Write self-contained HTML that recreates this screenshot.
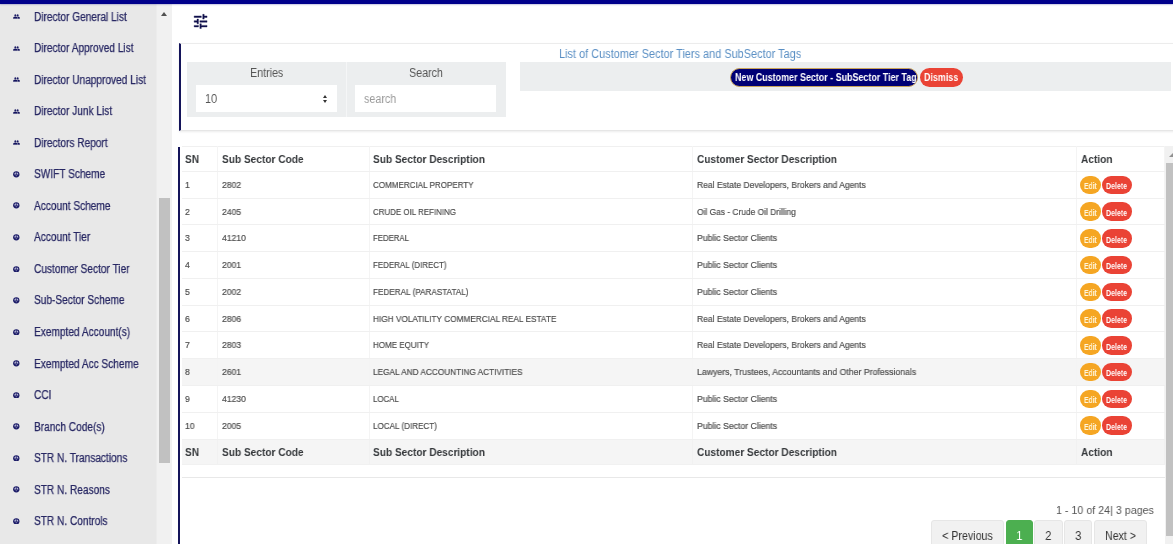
<!DOCTYPE html>
<html lang="en"><head><meta charset="utf-8"><title>Customer Sector Tiers</title>
<style>
html,body{margin:0;padding:0}
body{width:1173px;height:544px;overflow:hidden;background:#fff;position:relative;font-family:"Liberation Sans",sans-serif;color:#333}
.sx{will-change:transform;display:inline-block;transform:scaleX(var(--k,1));transform-origin:0 50%;white-space:nowrap}
.topbar{position:absolute;left:0;top:0;width:1173px;height:4.400px;background:#00008b;z-index:5;box-shadow:0 1px 1.500px rgba(0,0,120,.22)}
.sidebar{position:absolute;left:0;top:0;width:156px;height:544px;background:#e8e8e8;overflow:hidden}
.si{position:absolute;left:0;height:20px;line-height:20px;width:157px}
.sic{position:absolute;left:12.900px;top:7.100px}
.sic.c{left:13px;top:7.100px}
.st{-webkit-text-stroke:.25px #272763;will-change:transform;position:absolute;left:34.400px;top:.5px;font-size:12px;color:#272763;display:inline-block;transform:scaleX(.843);transform-origin:0 50%;white-space:nowrap}
.sscroll{position:absolute;left:156px;top:4px;width:16px;border-left:1px solid #ececec;box-sizing:border-box;height:540px;background:#f1f1f1}
.sarrow{position:absolute;left:4px;top:7.500px;width:0;height:0;border-left:3.500px solid transparent;border-right:3.500px solid transparent;border-bottom:4px solid #505050}
.sthumb{position:absolute;left:2px;top:193.500px;width:11px;height:265px;background:#c1c1c1}
.tune{position:absolute;left:192.050px;top:12.050px}
.card1{position:absolute;left:178.500px;top:43px;width:1000px;height:88px;border-left:2px solid #14145a;border-top:1px solid #ececec;border-bottom:1px solid #e6e6e6;box-shadow:0 1px 2px rgba(0,0,0,.08);box-sizing:border-box;background:#fff}
.fbox{position:absolute;top:62.200px;height:55.300px;background:#eceeef}
.fdiv{position:absolute;left:345.800px;top:62.200px;width:1px;height:55.300px;background:#f5f6f7}
.flabel{position:absolute;top:64.500px;width:159px;text-align:center;font-size:12px;color:#555;line-height:16px}
.flabel .sx{transform-origin:50% 50%}
.finput{position:absolute;top:85.300px;width:141px;height:26.700px;background:#fff;font-size:12px;line-height:27.600px;color:#555}
.finput .sx{position:absolute;left:9px;top:1.200px}
.finput .ph{color:#9c9c9c;font-size:12.500px}
.updown{position:absolute;left:127.500px;top:10px;width:5px;height:8px}
.updown:before{content:"";position:absolute;left:0;top:0;border-left:2.500px solid transparent;border-right:2.500px solid transparent;border-bottom:3px solid #333}
.updown:after{content:"";position:absolute;left:0;top:4.500px;border-left:2.500px solid transparent;border-right:2.500px solid transparent;border-top:3px solid #333}
.title{position:absolute;left:559px;top:45.500px;font-size:12px;line-height:16px;color:#5a8fc4}
.bar{position:absolute;left:520.300px;top:62.300px;width:651.200px;height:28.300px;background:#eceeef}
.btn{position:absolute;top:67.500px;height:19px;border-radius:10px;box-sizing:border-box;color:#fff;font-size:10.500px;font-weight:700;line-height:19px;white-space:nowrap}
.btn .sx{position:absolute;left:4.500px;top:0}
.btn.navy{left:730px;width:188px;background:#000075;border:1px solid #c9a45a;line-height:17px}
.btn.navy .sx{left:3.500px}
.btn.red{left:919.500px;width:43.500px;background:#ea4335}
.card2{position:absolute;left:178.300px;top:147px;width:986.300px;height:400px;border-left:2px solid #14145a;box-sizing:border-box;background:#fff}
.tbl{position:absolute;left:182px;top:145.900px;width:982.500px;border-collapse:collapse;table-layout:fixed}
.tbl th,.tbl td{box-sizing:border-box;border:1px solid #f0f0f0;border-left-color:#f4f4f4;border-right-color:#f4f4f4;padding:0 0 0 4px;text-align:left;vertical-align:middle;overflow:hidden;white-space:nowrap}
.tbl th:first-child,.tbl td:first-child{border-left:none;padding-left:3.200px}
.tbl th{height:25px;font-size:11.500px;font-weight:700;color:#36393c}
.tbl td{height:26.770px;font-size:9px;color:#4c4c4c;-webkit-text-stroke:.18px #4c4c4c}
.tbl tr.foot th{background:#f5f5f5;border-color:#f1f1f1}
.tbl tr.hov td{background:#f5f5f5}
.c1{width:35.500px}.c2{width:151.500px}.c3{width:323.500px}.c4{width:384px}.c5{width:88px}
.tbl .k2{padding-left:4.300px}.tbl .k3{padding-left:3.800px}.tbl .k4{padding-left:4px}.tbl .k5{padding-left:4px}
.hx{--k:.88}
.rx{--k:.895}
.rx.m{--k:.948}
.rx.d{--k:.955}
.pill{-webkit-text-stroke:0;display:inline-block;vertical-align:middle;height:18.400px;border-radius:9.200px;color:#fff;font-size:9px;font-weight:700;line-height:18.400px;position:relative}
.pill .sx{position:absolute;left:4.600px;top:1.400px}
.pill.ed{width:21.300px;background:#f5a623;margin-left:-1.1px;color:#fff6dc}
.pill.de{width:29.800px;background:#ea4335;margin-left:.8px}
.pill.de .sx{left:3.800px}
.pill.ed .sx{left:4.100px;--k:.75}
.px{--k:.78}
.hr2{position:absolute;left:182px;top:477px;width:983px;height:1px;background:#e8e8e8}
.pginfo{position:absolute;left:1055.700px;top:502.400px;font-size:11.800px;line-height:16px;color:#555}
.pager{position:absolute;left:930.700px;top:520.300px;height:30px;width:220px}
.pb{position:absolute;top:0;height:30px;box-sizing:border-box;border:1px solid #e6e6e6;border-radius:3px 3px 0 0;background:#f1f1f1;color:#333;font-size:12px;line-height:30.200px;text-align:center}
.pb .sx{transform-origin:50% 50%}
.pb.on{background:#4caf50;border-color:#4caf50;color:#fff}
.pgx{--k:.885}
.pscroll{position:absolute;left:1165px;top:146px;width:17px;height:400px;background:#f1f1f1}
.parrow{position:absolute;left:3.700px;top:6.800px;width:0;height:0;border-left:4.300px solid transparent;border-right:4.300px solid transparent;border-bottom:4.100px solid #909090}
.pthumb{position:absolute;left:1.300px;top:17.200px;width:14px;height:372.500px;background:#c1c1c1}

</style></head>
<body>
<div class="topbar"></div>
<div class="sidebar">
<div class="si" style="top:6.20px"><svg class="sic" viewBox="0 0 24 24" width="7" height="7"><path fill="#14145f" stroke="#14145f" stroke-width="1.2" d="M16 11c1.66 0 2.99-1.34 2.99-3S17.66 5 16 5c-1.66 0-3 1.34-3 3s1.340 3 3 3zm-8 0c1.66 0 2.990-1.340 2.990-3S9.660 5 8 5C6.340 5 5 6.340 5 8s1.340 3 3 3zm0 2c-2.330 0-7 1.170-7 3.500V19h14v-2.500c0-2.330-4.670-3.500-7-3.500zm8 0c-.29 0-.62.02-.97.05 1.160.84 1.970 1.970 1.970 3.450V19h6v-2.500c0-2.330-4.670-3.500-7-3.500z"/></svg><span class="st">Director General List</span></div>
<div class="si" style="top:37.73px"><svg class="sic" viewBox="0 0 24 24" width="7" height="7"><path fill="#14145f" stroke="#14145f" stroke-width="1.2" d="M16 11c1.66 0 2.99-1.34 2.99-3S17.66 5 16 5c-1.66 0-3 1.34-3 3s1.340 3 3 3zm-8 0c1.66 0 2.990-1.340 2.990-3S9.660 5 8 5C6.340 5 5 6.340 5 8s1.340 3 3 3zm0 2c-2.330 0-7 1.170-7 3.500V19h14v-2.500c0-2.330-4.670-3.500-7-3.500zm8 0c-.29 0-.62.02-.97.05 1.160.84 1.970 1.970 1.970 3.450V19h6v-2.500c0-2.330-4.670-3.500-7-3.500z"/></svg><span class="st">Director Approved List</span></div>
<div class="si" style="top:69.26px"><svg class="sic" viewBox="0 0 24 24" width="7" height="7"><path fill="#14145f" stroke="#14145f" stroke-width="1.2" d="M16 11c1.66 0 2.99-1.34 2.99-3S17.66 5 16 5c-1.66 0-3 1.34-3 3s1.340 3 3 3zm-8 0c1.66 0 2.990-1.340 2.990-3S9.660 5 8 5C6.340 5 5 6.340 5 8s1.340 3 3 3zm0 2c-2.330 0-7 1.170-7 3.500V19h14v-2.500c0-2.330-4.670-3.500-7-3.500zm8 0c-.29 0-.62.02-.97.05 1.160.84 1.970 1.970 1.970 3.450V19h6v-2.500c0-2.330-4.670-3.500-7-3.500z"/></svg><span class="st">Director Unapproved List</span></div>
<div class="si" style="top:100.79px"><svg class="sic" viewBox="0 0 24 24" width="7" height="7"><path fill="#14145f" stroke="#14145f" stroke-width="1.2" d="M16 11c1.66 0 2.99-1.34 2.99-3S17.66 5 16 5c-1.66 0-3 1.34-3 3s1.340 3 3 3zm-8 0c1.66 0 2.990-1.340 2.990-3S9.660 5 8 5C6.340 5 5 6.340 5 8s1.340 3 3 3zm0 2c-2.330 0-7 1.170-7 3.500V19h14v-2.500c0-2.330-4.670-3.500-7-3.500zm8 0c-.29 0-.62.02-.97.05 1.160.84 1.970 1.970 1.970 3.450V19h6v-2.500c0-2.330-4.670-3.500-7-3.500z"/></svg><span class="st">Director Junk List</span></div>
<div class="si" style="top:132.32px"><svg class="sic" viewBox="0 0 24 24" width="7" height="7"><path fill="#14145f" stroke="#14145f" stroke-width="1.2" d="M16 11c1.66 0 2.99-1.34 2.99-3S17.66 5 16 5c-1.66 0-3 1.34-3 3s1.340 3 3 3zm-8 0c1.66 0 2.990-1.340 2.990-3S9.660 5 8 5C6.340 5 5 6.340 5 8s1.340 3 3 3zm0 2c-2.330 0-7 1.170-7 3.500V19h14v-2.500c0-2.330-4.670-3.500-7-3.500zm8 0c-.29 0-.62.02-.97.05 1.160.84 1.970 1.970 1.970 3.450V19h6v-2.500c0-2.330-4.670-3.500-7-3.500z"/></svg><span class="st">Directors Report</span></div>
<div class="si" style="top:163.85px"><svg class="sic c" viewBox="0 0 24 24" width="6.600" height="6.600"><circle cx="12" cy="12" r="11.500" fill="#1a1a66"/><path d="M4.500 12.500A7.500 7.500 0 0 1 10.800 4.600V12.500z" fill="#b4b4d4"/><path d="M19.500 12.500A7.500 7.500 0 0 0 13.200 4.600V12.500z" fill="#b4b4d4"/><ellipse cx="12" cy="17" rx="3.600" ry="1.700" fill="#9090bd"/></svg><span class="st">SWIFT Scheme</span></div>
<div class="si" style="top:195.38px"><svg class="sic c" viewBox="0 0 24 24" width="6.600" height="6.600"><circle cx="12" cy="12" r="11.500" fill="#1a1a66"/><path d="M4.500 12.500A7.500 7.500 0 0 1 10.800 4.600V12.500z" fill="#b4b4d4"/><path d="M19.500 12.500A7.500 7.500 0 0 0 13.200 4.600V12.500z" fill="#b4b4d4"/><ellipse cx="12" cy="17" rx="3.600" ry="1.700" fill="#9090bd"/></svg><span class="st">Account Scheme</span></div>
<div class="si" style="top:226.91px"><svg class="sic c" viewBox="0 0 24 24" width="6.600" height="6.600"><circle cx="12" cy="12" r="11.500" fill="#1a1a66"/><path d="M4.500 12.500A7.500 7.500 0 0 1 10.800 4.600V12.500z" fill="#b4b4d4"/><path d="M19.500 12.500A7.500 7.500 0 0 0 13.200 4.600V12.500z" fill="#b4b4d4"/><ellipse cx="12" cy="17" rx="3.600" ry="1.700" fill="#9090bd"/></svg><span class="st">Account Tier</span></div>
<div class="si" style="top:258.44px"><svg class="sic c" viewBox="0 0 24 24" width="6.600" height="6.600"><circle cx="12" cy="12" r="11.500" fill="#1a1a66"/><path d="M4.500 12.500A7.500 7.500 0 0 1 10.800 4.600V12.500z" fill="#b4b4d4"/><path d="M19.500 12.500A7.500 7.500 0 0 0 13.200 4.600V12.500z" fill="#b4b4d4"/><ellipse cx="12" cy="17" rx="3.600" ry="1.700" fill="#9090bd"/></svg><span class="st">Customer Sector Tier</span></div>
<div class="si" style="top:289.97px"><svg class="sic c" viewBox="0 0 24 24" width="6.600" height="6.600"><circle cx="12" cy="12" r="11.500" fill="#1a1a66"/><path d="M4.500 12.500A7.500 7.500 0 0 1 10.800 4.600V12.500z" fill="#b4b4d4"/><path d="M19.500 12.500A7.500 7.500 0 0 0 13.200 4.600V12.500z" fill="#b4b4d4"/><ellipse cx="12" cy="17" rx="3.600" ry="1.700" fill="#9090bd"/></svg><span class="st">Sub-Sector Scheme</span></div>
<div class="si" style="top:321.50px"><svg class="sic c" viewBox="0 0 24 24" width="6.600" height="6.600"><circle cx="12" cy="12" r="11.500" fill="#1a1a66"/><path d="M4.500 12.500A7.500 7.500 0 0 1 10.800 4.600V12.500z" fill="#b4b4d4"/><path d="M19.500 12.500A7.500 7.500 0 0 0 13.200 4.600V12.500z" fill="#b4b4d4"/><ellipse cx="12" cy="17" rx="3.600" ry="1.700" fill="#9090bd"/></svg><span class="st">Exempted Account(s)</span></div>
<div class="si" style="top:353.03px"><svg class="sic c" viewBox="0 0 24 24" width="6.600" height="6.600"><circle cx="12" cy="12" r="11.500" fill="#1a1a66"/><path d="M4.500 12.500A7.500 7.500 0 0 1 10.800 4.600V12.500z" fill="#b4b4d4"/><path d="M19.500 12.500A7.500 7.500 0 0 0 13.200 4.600V12.500z" fill="#b4b4d4"/><ellipse cx="12" cy="17" rx="3.600" ry="1.700" fill="#9090bd"/></svg><span class="st">Exempted Acc Scheme</span></div>
<div class="si" style="top:384.56px"><svg class="sic c" viewBox="0 0 24 24" width="6.600" height="6.600"><circle cx="12" cy="12" r="11.500" fill="#1a1a66"/><path d="M4.500 12.500A7.500 7.500 0 0 1 10.800 4.600V12.500z" fill="#b4b4d4"/><path d="M19.500 12.500A7.500 7.500 0 0 0 13.200 4.600V12.500z" fill="#b4b4d4"/><ellipse cx="12" cy="17" rx="3.600" ry="1.700" fill="#9090bd"/></svg><span class="st">CCI</span></div>
<div class="si" style="top:416.09px"><svg class="sic c" viewBox="0 0 24 24" width="6.600" height="6.600"><circle cx="12" cy="12" r="11.500" fill="#1a1a66"/><path d="M4.500 12.500A7.500 7.500 0 0 1 10.800 4.600V12.500z" fill="#b4b4d4"/><path d="M19.500 12.500A7.500 7.500 0 0 0 13.200 4.600V12.500z" fill="#b4b4d4"/><ellipse cx="12" cy="17" rx="3.600" ry="1.700" fill="#9090bd"/></svg><span class="st">Branch Code(s)</span></div>
<div class="si" style="top:447.62px"><svg class="sic c" viewBox="0 0 24 24" width="6.600" height="6.600"><circle cx="12" cy="12" r="11.500" fill="#1a1a66"/><path d="M4.500 12.500A7.500 7.500 0 0 1 10.800 4.600V12.500z" fill="#b4b4d4"/><path d="M19.500 12.500A7.500 7.500 0 0 0 13.200 4.600V12.500z" fill="#b4b4d4"/><ellipse cx="12" cy="17" rx="3.600" ry="1.700" fill="#9090bd"/></svg><span class="st">STR N. Transactions</span></div>
<div class="si" style="top:479.15px"><svg class="sic c" viewBox="0 0 24 24" width="6.600" height="6.600"><circle cx="12" cy="12" r="11.500" fill="#1a1a66"/><path d="M4.500 12.500A7.500 7.500 0 0 1 10.800 4.600V12.500z" fill="#b4b4d4"/><path d="M19.500 12.500A7.500 7.500 0 0 0 13.200 4.600V12.500z" fill="#b4b4d4"/><ellipse cx="12" cy="17" rx="3.600" ry="1.700" fill="#9090bd"/></svg><span class="st">STR N. Reasons</span></div>
<div class="si" style="top:510.68px"><svg class="sic c" viewBox="0 0 24 24" width="6.600" height="6.600"><circle cx="12" cy="12" r="11.500" fill="#1a1a66"/><path d="M4.500 12.500A7.500 7.500 0 0 1 10.800 4.600V12.500z" fill="#b4b4d4"/><path d="M19.500 12.500A7.500 7.500 0 0 0 13.200 4.600V12.500z" fill="#b4b4d4"/><ellipse cx="12" cy="17" rx="3.600" ry="1.700" fill="#9090bd"/></svg><span class="st">STR N. Controls</span></div>
</div>
<div class="sscroll"><div class="sarrow"></div><div class="sthumb"></div></div>
<svg class="tune" viewBox="0 0 24 24" width="17.200" height="18.900" preserveAspectRatio="none"><path fill="#10104c" stroke="#10104c" stroke-width=".5" d="M3 17v2h6v-2H3zM3 5v2h10V5H3zm10 16v-2h8v-2h-8v-2h-2v6h2zM7 9v2H3v2h4v2h2V9H7zm14 4v-2H11v2h10zm-6-4h2V7h4V5h-4V3h-2v6z"/></svg>
<div class="card1"></div>
<div class="fbox" style="left:187px;width:318.600px"></div><div class="fdiv"></div>
<div class="flabel" style="left:187px"><span class="sx" style="--k:.89">Entries</span></div>
<div class="flabel" style="left:346.500px"><span class="sx" style="--k:.89">Search</span></div>
<div class="finput" style="left:195.500px"><span class="sx val" style="--k:.9">10</span><span class="updown"></span></div>
<div class="finput" style="left:355px"><span class="sx ph" style="--k:.86">search</span></div>
<div class="title"><span class="sx" style="--k:.911">List of Customer Sector Tiers and SubSector Tags</span></div>
<div class="bar"></div>
<span class="btn navy"><span class="sx" style="--k:.85">New Customer Sector - SubSector Tier Tag</span></span><span class="btn red"><span class="sx" style="--k:.85">Dismiss</span></span>
<div class="card2"></div>
<table class="tbl">
<thead><tr class="head"><th class="c1"><span class="sx hx">SN</span></th><th class="c2 k2"><span class="sx hx">Sub Sector Code</span></th><th class="c3 k3"><span class="sx hx">Sub Sector Description</span></th><th class="c4 k4"><span class="sx hx">Customer Sector Description</span></th><th class="c5 k5"><span class="sx hx">Action</span></th></tr>
</thead>
<tbody>
<tr><td><span class="sx rx d">1</span></td><td class="k2"><span class="sx rx d">2802</span></td><td class="k3"><span class="sx rx" style="--k:0.894">COMMERCIAL PROPERTY</span></td><td class="k4"><span class="sx rx m" style="--k:0.948">Real Estate Developers, Brokers and Agents</span></td><td class="act"><span class="pill ed"><span class="sx px">Edit</span></span><span class="pill de"><span class="sx px">Delete</span></span></td></tr>
<tr><td><span class="sx rx d">2</span></td><td class="k2"><span class="sx rx d">2405</span></td><td class="k3"><span class="sx rx" style="--k:0.880">CRUDE OIL REFINING</span></td><td class="k4"><span class="sx rx m" style="--k:0.932">Oil Gas - Crude Oil Drilling</span></td><td class="act"><span class="pill ed"><span class="sx px">Edit</span></span><span class="pill de"><span class="sx px">Delete</span></span></td></tr>
<tr><td><span class="sx rx d">3</span></td><td class="k2"><span class="sx rx d">41210</span></td><td class="k3"><span class="sx rx" style="--k:0.865">FEDERAL</span></td><td class="k4"><span class="sx rx m" style="--k:0.965">Public Sector Clients</span></td><td class="act"><span class="pill ed"><span class="sx px">Edit</span></span><span class="pill de"><span class="sx px">Delete</span></span></td></tr>
<tr><td><span class="sx rx d">4</span></td><td class="k2"><span class="sx rx d">2001</span></td><td class="k3"><span class="sx rx" style="--k:0.883">FEDERAL (DIRECT)</span></td><td class="k4"><span class="sx rx m" style="--k:0.965">Public Sector Clients</span></td><td class="act"><span class="pill ed"><span class="sx px">Edit</span></span><span class="pill de"><span class="sx px">Delete</span></span></td></tr>
<tr><td><span class="sx rx d">5</span></td><td class="k2"><span class="sx rx d">2002</span></td><td class="k3"><span class="sx rx" style="--k:0.905">FEDERAL (PARASTATAL)</span></td><td class="k4"><span class="sx rx m" style="--k:0.965">Public Sector Clients</span></td><td class="act"><span class="pill ed"><span class="sx px">Edit</span></span><span class="pill de"><span class="sx px">Delete</span></span></td></tr>
<tr><td><span class="sx rx d">6</span></td><td class="k2"><span class="sx rx d">2806</span></td><td class="k3"><span class="sx rx" style="--k:0.916">HIGH VOLATILITY COMMERCIAL REAL ESTATE</span></td><td class="k4"><span class="sx rx m" style="--k:0.948">Real Estate Developers, Brokers and Agents</span></td><td class="act"><span class="pill ed"><span class="sx px">Edit</span></span><span class="pill de"><span class="sx px">Delete</span></span></td></tr>
<tr><td><span class="sx rx d">7</span></td><td class="k2"><span class="sx rx d">2803</span></td><td class="k3"><span class="sx rx" style="--k:0.890">HOME EQUITY</span></td><td class="k4"><span class="sx rx m" style="--k:0.948">Real Estate Developers, Brokers and Agents</span></td><td class="act"><span class="pill ed"><span class="sx px">Edit</span></span><span class="pill de"><span class="sx px">Delete</span></span></td></tr>
<tr class="hov"><td><span class="sx rx d">8</span></td><td class="k2"><span class="sx rx d">2601</span></td><td class="k3"><span class="sx rx" style="--k:0.916">LEGAL AND ACCOUNTING ACTIVITIES</span></td><td class="k4"><span class="sx rx m" style="--k:0.970">Lawyers, Trustees, Accountants and Other Professionals</span></td><td class="act"><span class="pill ed"><span class="sx px">Edit</span></span><span class="pill de"><span class="sx px">Delete</span></span></td></tr>
<tr><td><span class="sx rx d">9</span></td><td class="k2"><span class="sx rx d">41230</span></td><td class="k3"><span class="sx rx" style="--k:0.874">LOCAL</span></td><td class="k4"><span class="sx rx m" style="--k:0.965">Public Sector Clients</span></td><td class="act"><span class="pill ed"><span class="sx px">Edit</span></span><span class="pill de"><span class="sx px">Delete</span></span></td></tr>
<tr><td><span class="sx rx d">10</span></td><td class="k2"><span class="sx rx d">2005</span></td><td class="k3"><span class="sx rx" style="--k:0.896">LOCAL (DIRECT)</span></td><td class="k4"><span class="sx rx m" style="--k:0.965">Public Sector Clients</span></td><td class="act"><span class="pill ed"><span class="sx px">Edit</span></span><span class="pill de"><span class="sx px">Delete</span></span></td></tr>
</tbody>
<tfoot><tr class="foot"><th class="c1"><span class="sx hx">SN</span></th><th class="c2 k2"><span class="sx hx">Sub Sector Code</span></th><th class="c3 k3"><span class="sx hx">Sub Sector Description</span></th><th class="c4 k4"><span class="sx hx">Customer Sector Description</span></th><th class="c5 k5"><span class="sx hx">Action</span></th></tr>
</tfoot>
</table>
<div class="hr2"></div>
<div class="pginfo"><span class="sx" style="--k:.907">1 - 10 of 24| 3 pages</span></div>
<div class="pager"><span class="pb" style="left:0;width:73.700px"><span class="sx pgx">&lt; Previous</span></span><span class="pb on" style="left:75px;width:27.500px"><span class="sx pgx">1</span></span><span class="pb" style="left:103.800px;width:28.200px"><span class="sx pgx">2</span></span><span class="pb" style="left:133.200px;width:28.500px"><span class="sx pgx">3</span></span><span class="pb" style="left:163.200px;width:53px"><span class="sx pgx">Next &gt;</span></span></div>
<div class="pscroll"><div class="parrow"></div><div class="pthumb"></div></div>
</body></html>
